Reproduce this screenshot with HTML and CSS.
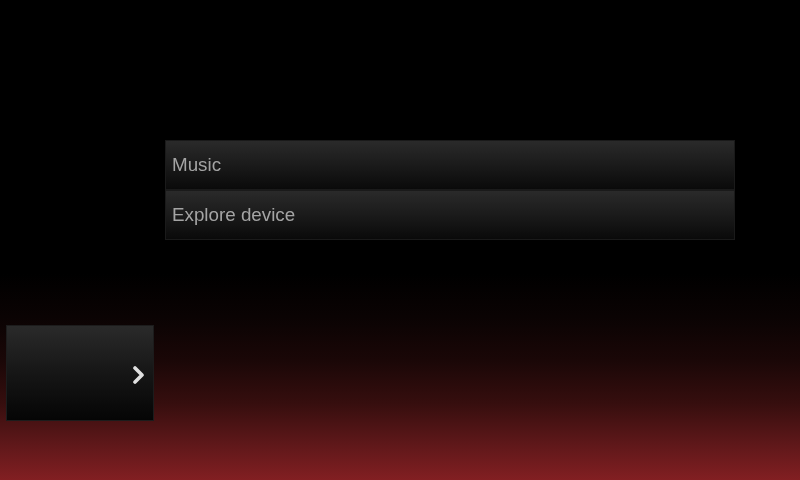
FILE: index.html
```html
<!DOCTYPE html>
<html>
<head>
<meta charset="utf-8">
<link rel="stylesheet" href="styles.css">
</head>
<body>
<div class="screen">
  <ul class="menu">
    <li class="item">Music</li>
    <li class="item">Explore device</li>
  </ul>
  <button class="next" aria-label="Next">
    <svg width="14" height="18" viewBox="0 0 14 18"><path d="M3 2 L10 9 L3 16" fill="none" stroke="#e0e0e0" stroke-width="3.6" stroke-linecap="round" stroke-linejoin="round"/></svg>
  </button>
</div>
</body>
</html>
```
FILE: styles.css
```css
html, body {
  margin: 0;
  padding: 0;
  background: #000;
}
.screen {
  width: 800px;
  height: 480px;
  display: flex;
  flex-direction: column;
  align-items: flex-start;
  padding-top: 140px;
  box-sizing: border-box;
  background: linear-gradient(to bottom, #000 0%, #000 57%, #0a0303 66%, #1a0707 75%, #360e0e 84%, #5c1719 92%, #821f22 100%);
  font-family: "Liberation Sans", Arial, sans-serif;
}
.menu {
  list-style: none;
  margin: 0 0 0 165px;
  padding: 0;
  width: 570px;
  display: flex;
  flex-direction: column;
  filter: blur(0.6px);
}
.item {
  height: 50px;
  box-sizing: border-box;
  display: flex;
  align-items: center;
  padding-left: 6px;
  font-size: 18.8px;
  color: #a4a4a4;
  background: linear-gradient(to bottom, #2a2a2a 0%, #1c1c1c 45%, #0a0a0a 100%);
  border: 1px solid #1a1a1a;
}
.next {
  margin: 85px 0 0 6px;
  width: 148px;
  height: 96px;
  border: 1px solid #1c1c1c;
  padding: 4px 7px 0 0;
  display: flex;
  align-items: center;
  justify-content: flex-end;
  background: linear-gradient(to bottom, #2a2a2a 0%, #161616 50%, #050505 100%);
  filter: blur(0.5px);
}
.next svg {
  display: block;
}
```
